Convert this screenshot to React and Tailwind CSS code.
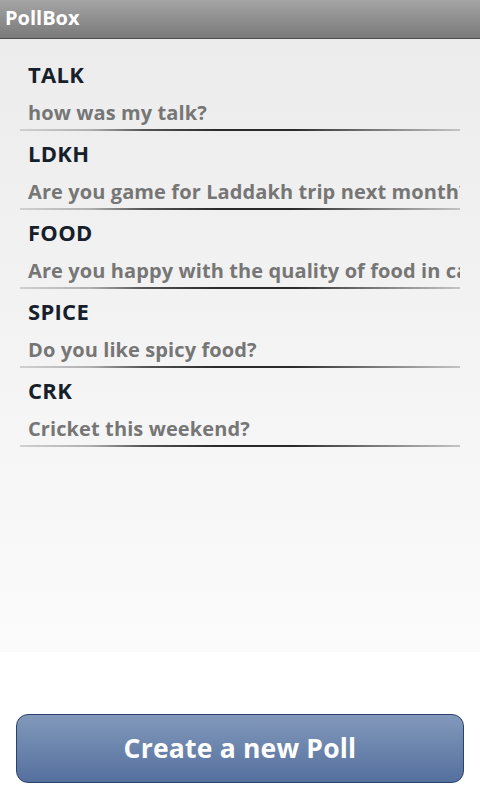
const POLLS = [
  { code: "TALK", question: "how was my talk?" },
  { code: "LDKH", question: "Are you game for Laddakh trip next month?" },
  { code: "FOOD", question: "Are you happy with the quality of food in cafeteria?" },
  { code: "SPICE", question: "Do you like spicy food?" },
  { code: "CRK", question: "Cricket this weekend?" },
];

function PollRow({ code, question }) {
  return (
    <div className="h-[79px] flex flex-col">
      <div className="pt-[7px] pl-[8px] overflow-hidden whitespace-nowrap">
        <div className="text-[22px] leading-[30px] font-bold tracking-[0.3px] text-[#16202b]">{code}</div>
        <div className="mt-[10px] text-[20px] leading-[27px] font-bold tracking-[0.1px] text-[#767676]">{question}</div>
      </div>
      <div className="mt-auto h-[2px] bg-[linear-gradient(to_right,#d0d0d0_0%,#b0b0b0_16%,#555_28%,#2a2a2a_45%,#2a2a2a_62%,#777_80%,#c4c4c4_100%)]" />
    </div>
  );
}

export default function App() {
  return (
    <div className="w-full h-[800px] flex flex-col font-['Open_Sans',sans-serif] bg-white">
      <div className="h-[39px] shrink-0 bg-gradient-to-b from-[#a5a5a5] to-[#7a7a7a] border-b border-[#4d4d4d] shadow-[0_2px_3px_rgba(0,0,0,0.15)] pl-[5px] text-white font-bold text-[20px] leading-[36px]">
        PollBox
      </div>
      <div className="flex-1 bg-gradient-to-b from-[#ececec] to-[#fbfbfb] pt-[13px] px-[20px]">
        {POLLS.map((p) => (
          <PollRow key={p.code} code={p.code} question={p.question} />
        ))}
      </div>
      <div className="h-[148px] shrink-0 bg-white pt-[62px] px-[16px]">
        <button className="w-full h-[69px] rounded-[12px] border-[1.5px] border-[#2c426e] bg-gradient-to-b from-[#8299bb] to-[#55709e] text-white font-bold text-[26.5px] tracking-[0.2px] font-['Open_Sans',sans-serif]">
          Create a new Poll
        </button>
      </div>
    </div>
  );
}
